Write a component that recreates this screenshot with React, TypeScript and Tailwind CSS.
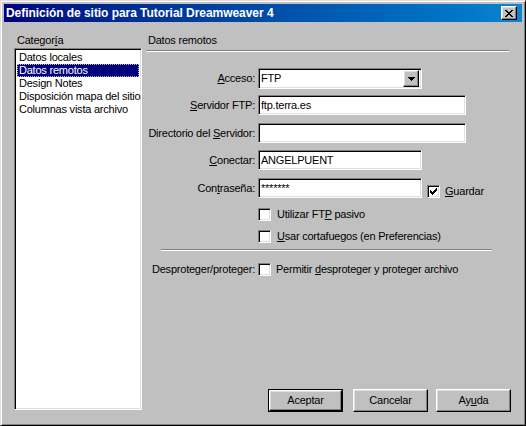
import React from "react";

const sunken =
  "border border-t-[#808080] border-l-[#808080] border-b-white border-r-white shadow-[inset_1px_1px_0_#000,inset_-1px_-1px_0_#dfdfdf]";
const raised =
  "border border-t-white border-l-white border-b-black border-r-black shadow-[inset_-1px_-1px_0_#808080,inset_1px_1px_0_#dfdfdf]";

// 1-bit bitmaps drawn as svg rects
const Bitmap = ({ rows, className }: { rows: string[]; className?: string }) => (
  <svg
    width={rows[0].length}
    height={rows.length}
    shapeRendering="crispEdges"
    className={className}
  >
    {rows.flatMap((r, y) =>
      r.split("").map((c, x) =>
        c === "X" ? <rect key={`${x}-${y}`} x={x} y={y} width={1} height={1} fill="#000" /> : null
      )
    )}
  </svg>
);

const closeX = ["XX....XX", ".XX..XX.", "..XXXX..", "...XX...", "..XXXX..", ".XX..XX.", "XX....XX"];
const check = ["......X", ".....XX", "X...XXX", "XX.XXX.", "XXXXX..", ".XXX...", "..X...."];
const arrow = ["XXXXXXX", ".XXXXX.", "..XXX..", "...X..."];

const Checkbox = ({ checked = false }: { checked?: boolean }) => (
  <div className={`w-[13px] h-[13px] shrink-0 bg-white flex items-center justify-center ${sunken}`}>
    {checked && <Bitmap rows={check} />}
  </div>
);

const Label = ({ children }: { children: React.ReactNode }) => (
  <div className="w-[109px] shrink-0 text-right whitespace-nowrap">{children}</div>
);

const Field = ({ w, value }: { w: string; value?: string }) => (
  <div className={`${w} h-[20px] ml-[3px] bg-white pl-[2px] flex items-center ${sunken}`}>
    {value}
  </div>
);

const U = ({ children }: { children: React.ReactNode }) => (
  <span className="underline underline-offset-1">{children}</span>
);

export default function App() {
  const items = [
    "Datos locales",
    "Datos remotos",
    "Design Notes",
    "Disposición mapa del sitio",
    "Columnas vista archivo",
  ];

  return (
    <div className="w-[526px] h-[426px] bg-[#c0c0c0] border border-t-[#dfdfdf] border-l-[#dfdfdf] border-b-black border-r-black shadow-[inset_1px_1px_0_#fff,inset_-1px_-1px_0_#808080] p-[3px] flex flex-col font-['Liberation_Sans',Arial,sans-serif] text-[11px] leading-[13px] tracking-[-0.22px] text-black select-none">
      {/* title bar */}
      <div className="h-[18px] shrink-0 bg-linear-to-r from-[#000080] to-[#1084d0] flex items-center pl-[2px] pr-[5px]">
        <span className="text-white font-bold text-[12px] tracking-[-0.05px]">
          Definición de sitio para Tutorial Dreamweaver 4
        </span>
        <div className={`ml-auto w-[16px] h-[14px] bg-[#c0c0c0] flex items-center justify-center ${raised}`}>
          <Bitmap rows={closeX} />
        </div>
      </div>

      <div className="flex flex-1 pl-[10px]">
        {/* left column */}
        <div className="w-[128px] flex flex-col">
          <div className="mt-[12px] h-[13px] pl-[3px]">
            Categor<U>í</U>a
          </div>
          <div className={`mt-[1px] h-[362px] bg-white p-[2px] ${sunken}`}>
            {items.map((it) => (
              <div
                key={it}
                className={`h-[13px] pl-[2px] whitespace-nowrap ${
                  it === "Datos remotos"
                    ? "bg-[#000080] text-white outline outline-1 outline-dotted outline-[#c0c080] -outline-offset-1"
                    : ""
                }`}
              >
                {it}
              </div>
            ))}
          </div>
        </div>

        {/* right column */}
        <div className="w-[365px] ml-[4px] flex flex-col">
          <div className="mt-[12px] h-[13px] pl-[2px]">Datos remotos</div>
          <div className="mt-[3px] w-[363px] h-[2px] border-t border-t-[#808080] border-b border-b-white" />

          <div className="mt-[16px] flex items-center h-[21px]">
            <Label>
              <U>A</U>cceso:
            </Label>
            <div className={`w-[164px] h-[21px] ml-[3px] bg-white flex items-center pl-[2px] pr-[2px] ${sunken}`}>
              <span className="flex-1">FTP</span>
              <div className={`w-[16px] h-[17px] bg-[#c0c0c0] flex items-center justify-center ${raised}`}>
                <Bitmap rows={arrow} />
              </div>
            </div>
          </div>

          <div className="mt-[6px] flex items-center">
            <Label>
              <U>S</U>ervidor FTP:
            </Label>
            <Field w="w-[208px]" value="ftp.terra.es" />
          </div>

          <div className="mt-[8px] flex items-center">
            <Label>
              Directorio del <U>S</U>ervidor:
            </Label>
            <Field w="w-[208px]" />
          </div>

          <div className="mt-[7px] flex items-center">
            <Label>
              <U>C</U>onectar:
            </Label>
            <Field w="w-[164px]" value="ANGELPUENT" />
          </div>

          <div className="mt-[8px] flex items-center">
            <Label>
              Con<U>t</U>raseña:
            </Label>
            <Field w="w-[164px]" value="*******" />
            <div className="ml-[5px] mt-[7px] flex items-center">
              <Checkbox checked />
              <span className="ml-[5px]">
                <U>G</U>uardar
              </span>
            </div>
          </div>

          <div className="mt-[10px] ml-[112px] flex items-center h-[13px]">
            <Checkbox />
            <span className="ml-[6px]">
              Utilizar FT<U>P</U> pasivo
            </span>
          </div>

          <div className="mt-[9px] ml-[112px] flex items-center h-[13px]">
            <Checkbox />
            <span className="ml-[6px]">
              <U>U</U>sar cortafuegos (en Preferencias)
            </span>
          </div>

          <div className="mt-[6px] ml-[15px] w-[331px] h-[2px] border-t border-t-[#808080] border-b border-b-white" />

          <div className="mt-[12px] flex items-center h-[13px]">
            <Label>Desproteger/proteger:</Label>
            <div className="ml-[3px]">
              <Checkbox />
            </div>
            <span className="ml-[5px]">
              Permitir <U>d</U>esproteger y proteger archivo
            </span>
          </div>

          <div className="flex-1" />

          <div className="mb-[10px] flex">
            <div className="ml-[122px] w-[75px] h-[23px] border border-black">
              <div className={`w-full h-full bg-[#c0c0c0] flex items-center justify-center ${raised}`}>
                Aceptar
              </div>
            </div>
            <div className={`ml-[10px] w-[75px] h-[23px] bg-[#c0c0c0] flex items-center justify-center ${raised}`}>
              Cancelar
            </div>
            <div className={`ml-[8px] w-[75px] h-[23px] bg-[#c0c0c0] flex items-center justify-center ${raised}`}>
              Ay<U>u</U>da
            </div>
          </div>
        </div>
      </div>
    </div>
  );
}
